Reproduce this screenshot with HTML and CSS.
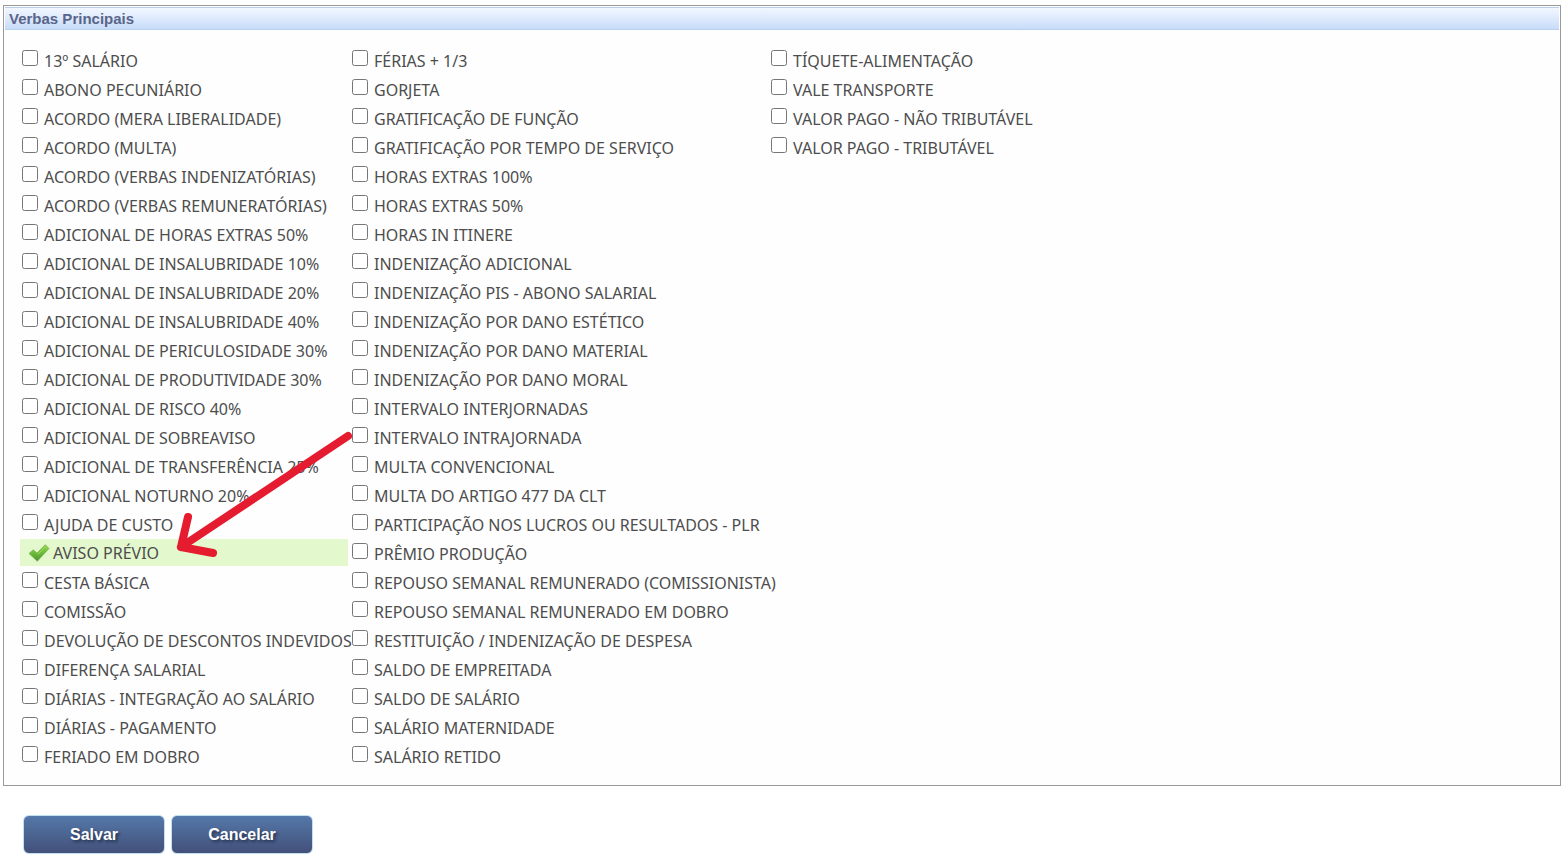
FILE: index.html
```html
<!DOCTYPE html>
<html lang="pt-BR">
<head>
<meta charset="utf-8">
<title>Verbas Principais</title>
<link rel="stylesheet" href="styles.css">
</head>
<body>
<form>
<section class="panel">
<h1 class="panel-title">Verbas Principais</h1>
<div class="columns">
<ul class="list">
<li class="item"><label><input type="checkbox">13º SALÁRIO</label></li>
<li class="item"><label><input type="checkbox">ABONO PECUNIÁRIO</label></li>
<li class="item"><label><input type="checkbox">ACORDO (MERA LIBERALIDADE)</label></li>
<li class="item"><label><input type="checkbox">ACORDO (MULTA)</label></li>
<li class="item"><label><input type="checkbox">ACORDO (VERBAS INDENIZATÓRIAS)</label></li>
<li class="item"><label><input type="checkbox">ACORDO (VERBAS REMUNERATÓRIAS)</label></li>
<li class="item"><label><input type="checkbox">ADICIONAL DE HORAS EXTRAS 50%</label></li>
<li class="item"><label><input type="checkbox">ADICIONAL DE INSALUBRIDADE 10%</label></li>
<li class="item"><label><input type="checkbox">ADICIONAL DE INSALUBRIDADE 20%</label></li>
<li class="item"><label><input type="checkbox">ADICIONAL DE INSALUBRIDADE 40%</label></li>
<li class="item"><label><input type="checkbox">ADICIONAL DE PERICULOSIDADE 30%</label></li>
<li class="item"><label><input type="checkbox">ADICIONAL DE PRODUTIVIDADE 30%</label></li>
<li class="item"><label><input type="checkbox">ADICIONAL DE RISCO 40%</label></li>
<li class="item"><label><input type="checkbox">ADICIONAL DE SOBREAVISO</label></li>
<li class="item"><label><input type="checkbox">ADICIONAL DE TRANSFERÊNCIA 25%</label></li>
<li class="item"><label><input type="checkbox">ADICIONAL NOTURNO 20%</label></li>
<li class="item"><label><input type="checkbox">AJUDA DE CUSTO</label></li>
<li class="item selected"><label><span class="tick"><input type="checkbox" checked><svg viewBox="0 0 22 20" width="22" height="20" aria-hidden="true"><defs><linearGradient id="leaf" x1="0" y1="0" x2="0" y2="1"><stop offset="0" stop-color="#8fd446"/><stop offset="0.5" stop-color="#6dbb38"/><stop offset="1" stop-color="#4d9232"/></linearGradient></defs><path d="M1 10.5 5.2 6.8 9 10 17.3 1.7 21 5.5 9.3 18.3Z" fill="url(#leaf)" stroke="#7fb45a" stroke-width="0.8" stroke-linejoin="round"/><path d="M10 11.3 17.3 3.9 19 5.5" fill="none" stroke="#a0e05c" stroke-width="1"/></svg></span>AVISO PRÉVIO</label><svg class="arrow" viewBox="0 0 184 134" width="184" height="134" aria-hidden="true"><path d="M173 7 6 118M13 88 6 118 38 124" fill="none" stroke="#e51b2f" stroke-width="8" stroke-linecap="round" stroke-linejoin="round"/></svg></li>
<li class="item"><label><input type="checkbox">CESTA BÁSICA</label></li>
<li class="item"><label><input type="checkbox">COMISSÃO</label></li>
<li class="item"><label><input type="checkbox">DEVOLUÇÃO DE DESCONTOS INDEVIDOS</label></li>
<li class="item"><label><input type="checkbox">DIFERENÇA SALARIAL</label></li>
<li class="item"><label><input type="checkbox">DIÁRIAS - INTEGRAÇÃO AO SALÁRIO</label></li>
<li class="item"><label><input type="checkbox">DIÁRIAS - PAGAMENTO</label></li>
<li class="item"><label><input type="checkbox">FERIADO EM DOBRO</label></li>
</ul>
<ul class="list">
<li class="item"><label><input type="checkbox">FÉRIAS + 1/3</label></li>
<li class="item"><label><input type="checkbox">GORJETA</label></li>
<li class="item"><label><input type="checkbox">GRATIFICAÇÃO DE FUNÇÃO</label></li>
<li class="item"><label><input type="checkbox">GRATIFICAÇÃO POR TEMPO DE SERVIÇO</label></li>
<li class="item"><label><input type="checkbox">HORAS EXTRAS 100%</label></li>
<li class="item"><label><input type="checkbox">HORAS EXTRAS 50%</label></li>
<li class="item"><label><input type="checkbox">HORAS IN ITINERE</label></li>
<li class="item"><label><input type="checkbox">INDENIZAÇÃO ADICIONAL</label></li>
<li class="item"><label><input type="checkbox">INDENIZAÇÃO PIS - ABONO SALARIAL</label></li>
<li class="item"><label><input type="checkbox">INDENIZAÇÃO POR DANO ESTÉTICO</label></li>
<li class="item"><label><input type="checkbox">INDENIZAÇÃO POR DANO MATERIAL</label></li>
<li class="item"><label><input type="checkbox">INDENIZAÇÃO POR DANO MORAL</label></li>
<li class="item"><label><input type="checkbox">INTERVALO INTERJORNADAS</label></li>
<li class="item"><label><input type="checkbox">INTERVALO INTRAJORNADA</label></li>
<li class="item"><label><input type="checkbox">MULTA CONVENCIONAL</label></li>
<li class="item"><label><input type="checkbox">MULTA DO ARTIGO 477 DA CLT</label></li>
<li class="item"><label><input type="checkbox">PARTICIPAÇÃO NOS LUCROS OU RESULTADOS - PLR</label></li>
<li class="item"><label><input type="checkbox">PRÊMIO PRODUÇÃO</label></li>
<li class="item"><label><input type="checkbox">REPOUSO SEMANAL REMUNERADO (COMISSIONISTA)</label></li>
<li class="item"><label><input type="checkbox">REPOUSO SEMANAL REMUNERADO EM DOBRO</label></li>
<li class="item"><label><input type="checkbox">RESTITUIÇÃO / INDENIZAÇÃO DE DESPESA</label></li>
<li class="item"><label><input type="checkbox">SALDO DE EMPREITADA</label></li>
<li class="item"><label><input type="checkbox">SALDO DE SALÁRIO</label></li>
<li class="item"><label><input type="checkbox">SALÁRIO MATERNIDADE</label></li>
<li class="item"><label><input type="checkbox">SALÁRIO RETIDO</label></li>
</ul>
<ul class="list">
<li class="item"><label><input type="checkbox">TÍQUETE-ALIMENTAÇÃO</label></li>
<li class="item"><label><input type="checkbox">VALE TRANSPORTE</label></li>
<li class="item"><label><input type="checkbox">VALOR PAGO - NÃO TRIBUTÁVEL</label></li>
<li class="item"><label><input type="checkbox">VALOR PAGO - TRIBUTÁVEL</label></li>
</ul>
</div>
</section>
<div class="actions">
<button type="submit">Salvar</button>
<button type="button">Cancelar</button>
</div>
</form>
</body>
</html>
```
FILE: styles.css
```css
* { box-sizing: border-box; }
body {
  margin: 5px 3px 8px;
  background: #fff;
  color: #4d4d4d;
  font-family: Tahoma, "Noto Sans", sans-serif;
  font-size: 16px;
}
.panel {
  border: 1px solid #999;
  padding: 1px;
  background: #fefefe;
}
.panel-title {
  margin: 0;
  padding: 0 4px;
  border-top: 1px solid #bccdec;
  border-bottom: 1px solid #b8d2f0;
  background: linear-gradient(#f2f7ff, #c8dcf9);
  color: #5a658a;
  font: bold 15px/21px "Liberation Sans", Arial, sans-serif;
}
.columns {
  display: grid;
  grid-template-columns: 328px 417px 1fr;
  gap: 2px;
  padding: 16px 15px 15px;
}
.list {
  display: flex;
  flex-direction: column;
  gap: 2px;
  margin: 0;
  padding: 0;
  list-style: none;
}
.item {
  height: 27px;
  padding: 0 2px;
  line-height: 31px;
  white-space: nowrap;
}
.item label {
  display: flex;
  align-items: flex-start;
  gap: 6px;
}
.item input {
  flex: none;
  width: 16px;
  height: 16px;
  margin: 4px 0 0;
}
.item.selected {
  position: relative;
  padding-left: 8px;
  background: #e4f8cd;
  line-height: 29px;
}
.selected label { gap: 3px; }
.tick {
  position: relative;
  height: 27px;
  width: 22px;
}
.tick svg {
  display: block;
  margin-top: 4px;
}
.tick input {
  position: absolute;
  inset: 0;
  opacity: 0;
}
.arrow {
  position: absolute;
  left: 155px;
  top: -110px;
  pointer-events: none;
}
.actions {
  display: flex;
  gap: 6px;
  padding: 29px 20px 0;
}
.actions button {
  width: 142px;
  height: 39px;
  padding: 0;
  border: 1px solid #bfe0f0;
  border-radius: 6px;
  background: linear-gradient(#5478aa, #435079);
  color: #fff;
  font: bold 16px "Liberation Sans", Arial, sans-serif;
  text-shadow: 2px 2px 3px #26324f;
}
```
